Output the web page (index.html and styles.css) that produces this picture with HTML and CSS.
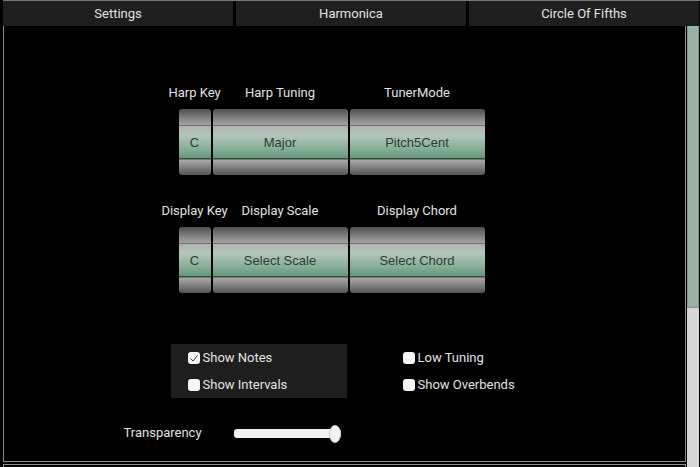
FILE: index.html
```
<!DOCTYPE html>
<html lang="en">
<head>
<meta charset="utf-8">
<meta name="viewport" content="width=device-width, initial-scale=1">
<title>Settings</title>
<link rel="stylesheet" href="styles.css">
</head>
<body>
<nav class="tabs">
  <button type="button" class="tab">Settings</button>
  <button type="button" class="tab">Harmonica</button>
  <button type="button" class="tab">Circle Of Fifths</button>
</nav>
<div class="view">
  <div class="pages">
    <main class="page">
      <form class="settings">
        <div class="pickers">
          <div class="field"><label for="key">Harp Key</label><select id="key" class="wheel"><option>C</option></select></div>
          <div class="field"><label for="tuning">Harp Tuning</label><select id="tuning" class="wheel"><option>Major</option></select></div>
          <div class="field"><label for="mode">TunerMode</label><select id="mode" class="wheel"><option>Pitch5Cent</option></select></div>
        </div>
        <div class="pickers">
          <div class="field"><label for="dkey">Display Key</label><select id="dkey" class="wheel"><option>C</option></select></div>
          <div class="field"><label for="scale">Display Scale</label><select id="scale" class="wheel"><option>Select Scale</option></select></div>
          <div class="field"><label for="chord">Display Chord</label><select id="chord" class="wheel"><option>Select Chord</option></select></div>
        </div>
        <div class="options">
          <div class="group shaded">
            <label class="check"><input type="checkbox" checked>Show Notes</label>
            <label class="check"><input type="checkbox">Show Intervals</label>
          </div>
          <div class="group">
            <label class="check"><input type="checkbox">Low Tuning</label>
            <label class="check"><input type="checkbox">Show Overbends</label>
          </div>
        </div>
        <div class="slider-row">
          <label for="transparency">Transparency</label>
          <input id="transparency" class="slider" type="range" min="0" max="100" value="100">
        </div>
      </form>
    </main>
    <div class="next-page"></div>
  </div>
  <div class="scrollbar"><div class="thumb"></div></div>
</div>
</body>
</html>
```
FILE: styles.css
```
* {
  box-sizing: border-box;
}

body {
  margin: 0;
  height: 100vh;
  display: flex;
  flex-direction: column;
  overflow: hidden;
  background: #000;
  color: #e2e2e2;
  font: 13px/20px Roboto, "Liberation Sans", sans-serif;
}

.tabs {
  display: flex;
  gap: 3px;
  margin-left: 3px;
  padding-right: 1px;
  border-top: 1px solid #777;
}

.tab {
  flex: 1;
  height: 25px;
  padding: 0;
  border: 0;
  background: #1e1e1e;
  color: inherit;
  font: inherit;
}

.view {
  flex: 1;
  min-height: 0;
  display: flex;
  gap: 1px;
  padding: 0 1px 0 3px;
}

.pages {
  flex: 1;
  display: flex;
  flex-direction: column;
  gap: 2px;
}

.page {
  flex: 1;
  padding-top: 57px;
  border: solid #8c8c8c;
  border-width: 0 1px 1px;
}

.next-page {
  height: 3px;
  border: solid #8c8c8c;
  border-width: 1px 1px 0;
}

.scrollbar {
  width: 12px;
  background: #d6d6d6;
}

.thumb {
  height: 64%;
  background: #9ab2a4;
  border: 1px solid #86988d;
  border-top: 0;
}

.settings {
  width: 442px;
  margin: 0 auto;
}

.pickers {
  display: grid;
  grid-template-columns: 32px 135px 135px;
  gap: 2px;
  margin: 0 0 26px 55px;
}

.field {
  display: flex;
  flex-direction: column;
  align-items: center;
  gap: 6px;
  white-space: nowrap;
}

.wheel {
  appearance: none;
  width: 100%;
  height: 66px;
  padding: 2px 0 0;
  border: 0;
  border-radius: 3px;
  background: linear-gradient(#505050 0, #a5a5a5 16px, #707070 16px, #707070 17px, #b0b2b0 17px, #b4c7bc 26px, #85ae96 40px, #659879 49px, #3a4a40 49px, #3a4a40 50px, #a8a8a8 51px, #555 66px);
  color: #2f3d35;
  font: 13px/20px "Liberation Sans", sans-serif;
  text-align: center;
  text-align-last: center;
}

.options {
  display: flex;
  gap: 39px;
  margin: 51px 0 25px 47px;
}

.group {
  width: 176px;
  height: 54px;
  padding: 4px 17px;
  display: flex;
  flex-direction: column;
  gap: 7px;
}

.shaded {
  background: #1e1e1e;
}

.check {
  display: flex;
  align-items: center;
  gap: 3px;
  white-space: nowrap;
}

.check input {
  appearance: none;
  width: 12px;
  height: 12px;
  margin: 0;
  border-radius: 3px;
  background: #f5f5f5;
}

.check input:checked {
  background: #f5f5f5 url("data:image/svg+xml,%3Csvg xmlns='http://www.w3.org/2000/svg' viewBox='0 0 12 12'%3E%3Cpath d='M2.5 6.5 5 9 9.5 3.5' fill='none' stroke='%23444' stroke-width='1'/%3E%3C/svg%3E");
}

.slider-row {
  display: flex;
  align-items: center;
}

.slider-row label {
  width: 110px;
}

.slider {
  appearance: none;
  width: 107px;
  height: 18px;
  margin: 0;
  background: transparent;
}

.slider::-webkit-slider-runnable-track {
  height: 9px;
  border-radius: 3px;
  background: #f2f2f2;
}

.slider::-webkit-slider-thumb {
  appearance: none;
  width: 12px;
  height: 18px;
  margin-top: -4px;
  border: 1px solid #ccc;
  border-radius: 50%;
  background: #f2f2f2;
}
```
